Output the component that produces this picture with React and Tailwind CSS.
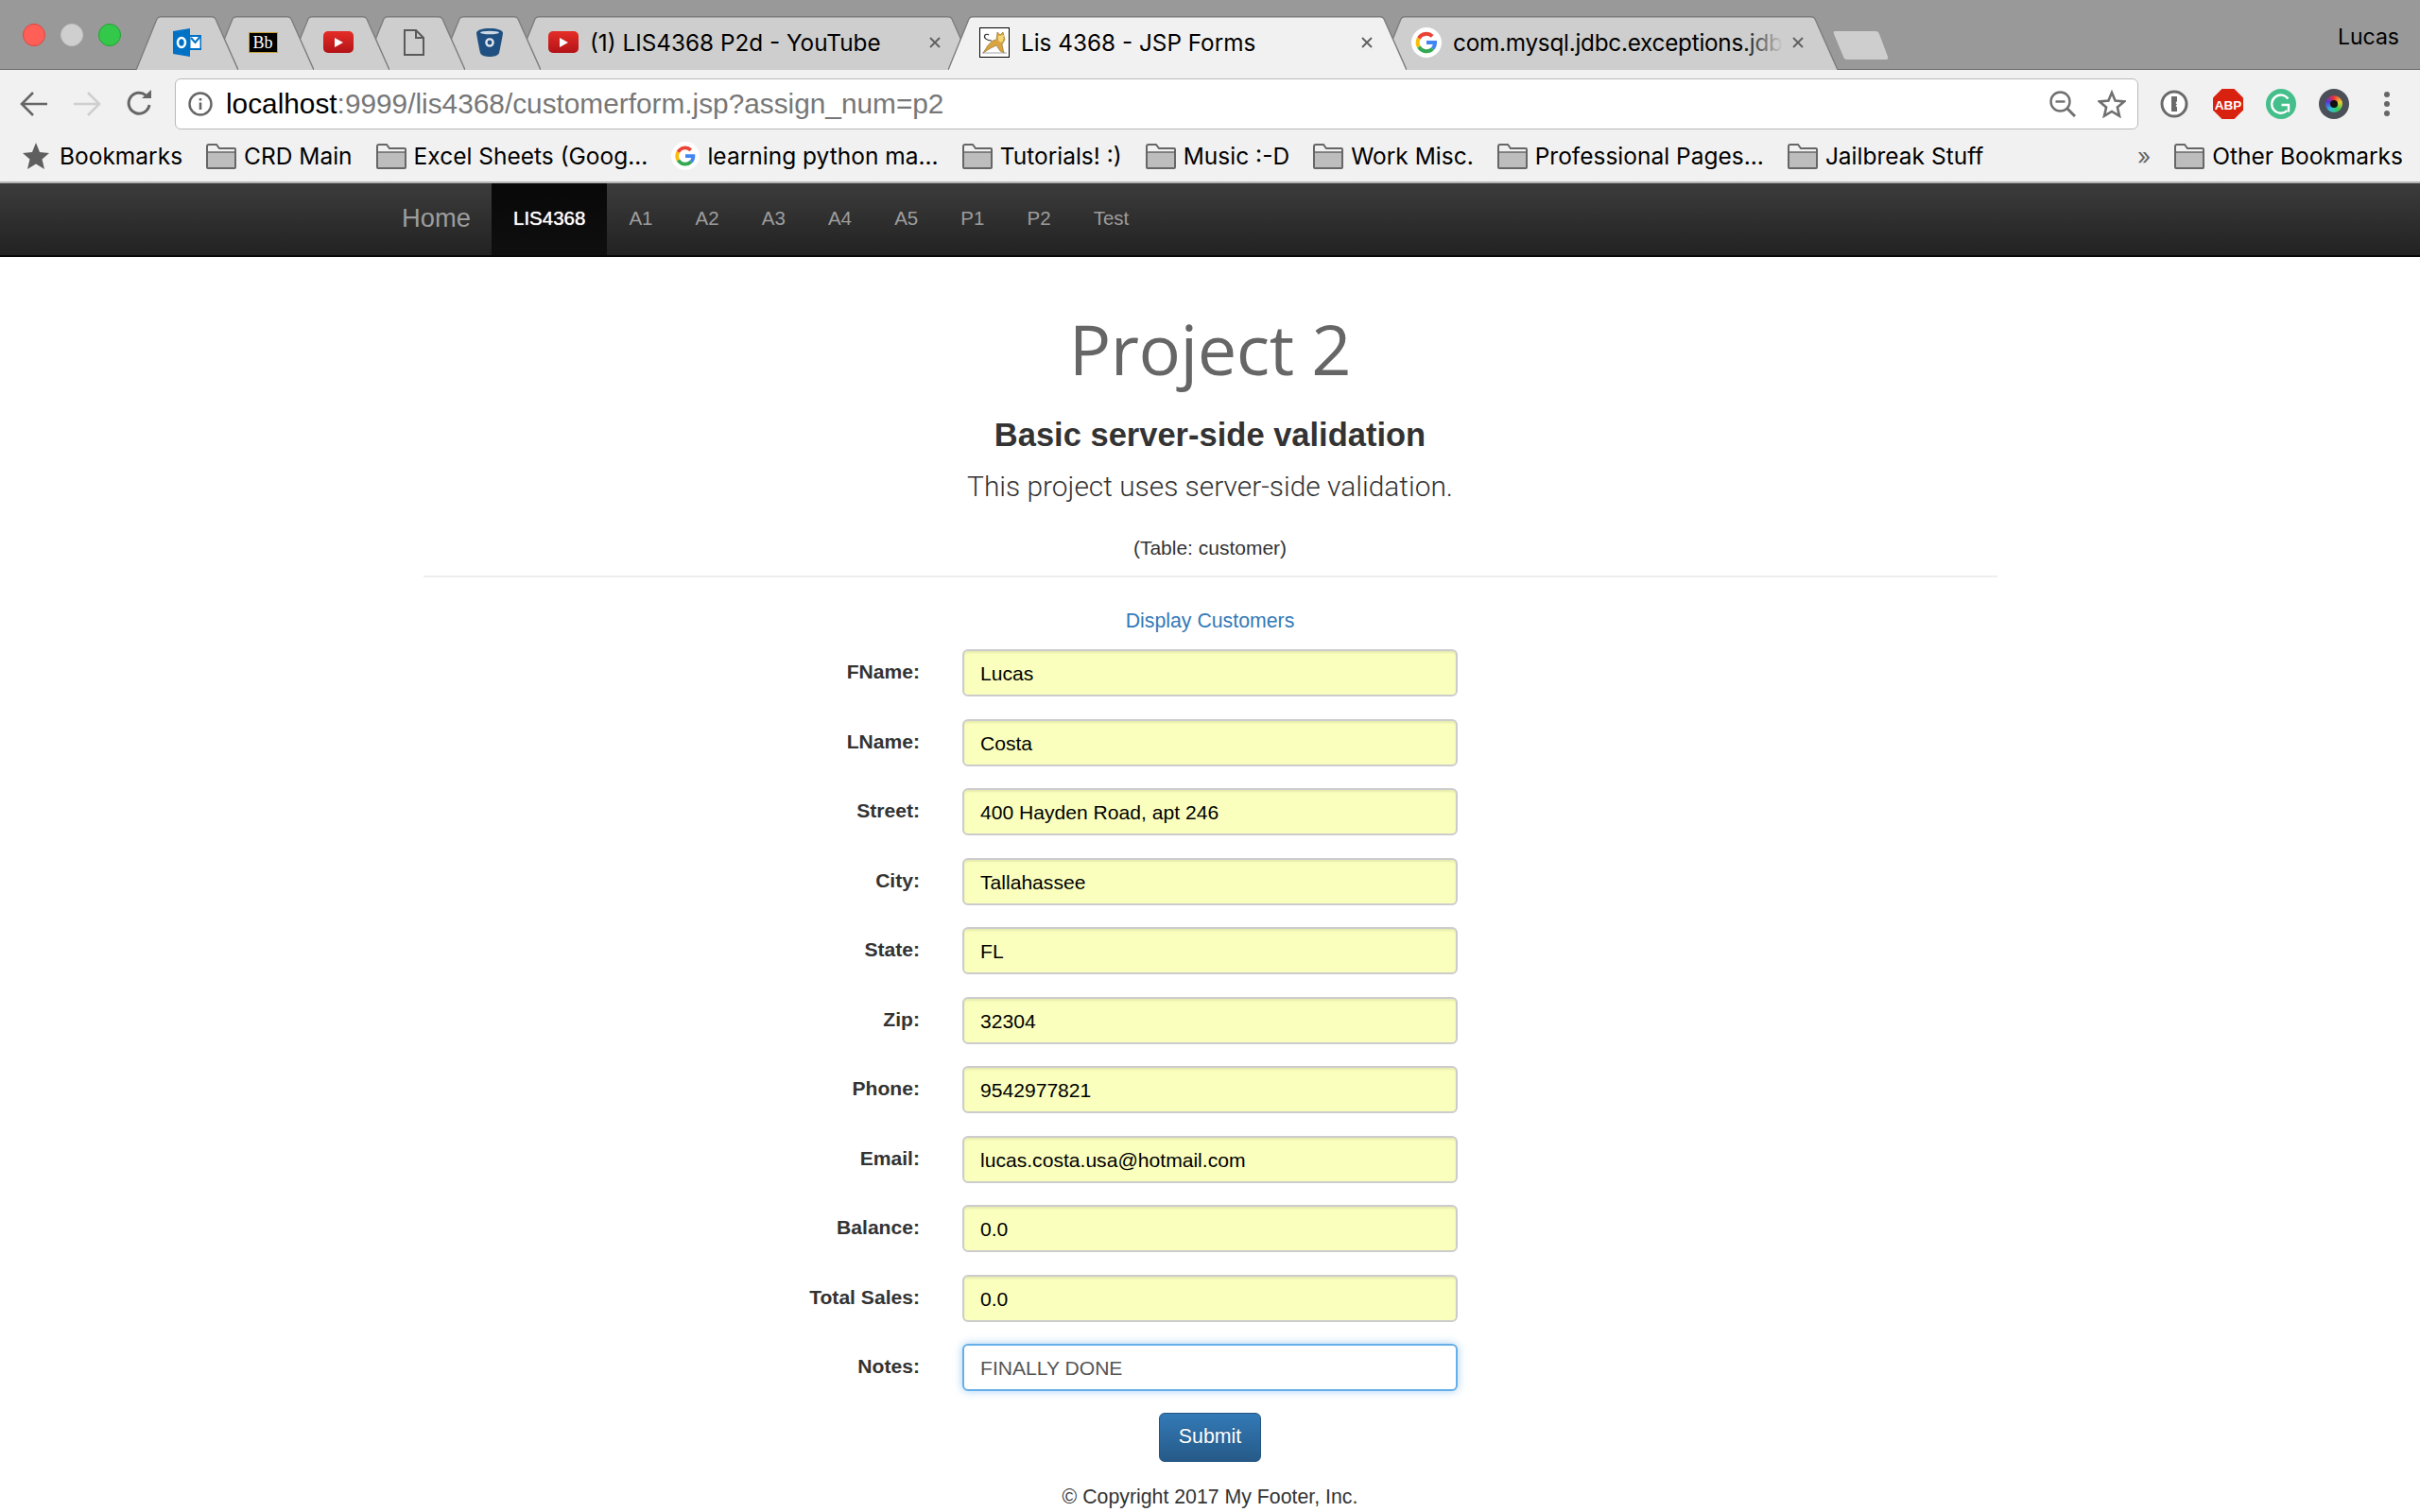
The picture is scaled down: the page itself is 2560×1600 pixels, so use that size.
import React from "react";

const Folder = () => (
  <svg width="32" height="27" viewBox="0 0 32 27" className="shrink-0">
    <path d="M1 3 Q1 1 3 1 H11 L14 5 H30 Q31 5 31 6 V25 Q31 26 30 26 H2 Q1 26 1 25 Z" fill="#f1f1f1" stroke="#666" strokeWidth="2" />
    <path d="M2 9 H30 V25 H2 Z" fill="#bdbdbd" />
    <path d="M1 9 H31" stroke="#666" strokeWidth="1.5" />
  </svg>
);

const GoogleG = ({ s = 32 }) => (
  <svg width={s} height={s} viewBox="0 0 32 32" className="shrink-0">
    <circle cx="16" cy="16" r="16" fill="#fff" />
    <path d="M16 16 H25 A9.2 9.2 0 0 1 22.4 22.6" fill="none" stroke="#4285f4" strokeWidth="4" />
    <path d="M22.4 22.6 A9.2 9.2 0 0 1 7.9 20.6" fill="none" stroke="#34a853" strokeWidth="4" />
    <path d="M7.9 20.6 A9.2 9.2 0 0 1 7.9 11.4" fill="none" stroke="#fbbc05" strokeWidth="4" />
    <path d="M7.9 11.4 A9.2 9.2 0 0 1 22.2 9.4" fill="none" stroke="#ea4335" strokeWidth="4" />
  </svg>
);

const Outlook = () => (
  <svg width="30" height="30" viewBox="0 0 30 30">
    <rect x="17" y="7" width="13" height="16" fill="#0072c6" />
    <rect x="18.5" y="9" width="10" height="12" fill="#fff" />
    <path d="M19 10 L23.5 15 L28.5 9" fill="none" stroke="#0072c6" strokeWidth="2" />
    <path d="M0 3 L18 0 V30 L0 27 Z" fill="#0072c6" />
    <ellipse cx="9" cy="15" rx="4" ry="5" fill="none" stroke="#fff" strokeWidth="2.6" />
  </svg>
);

const YouTube = () => (
  <div className="w-[32px] h-[23px] rounded-[5px] bg-gradient-to-b from-[#e52d27] to-[#b31217] flex items-center justify-center shrink-0">
    <svg width="10" height="10" viewBox="0 0 10 10"><path d="M1 0 L10 5 L1 10 Z" fill="#fff" /></svg>
  </div>
);

const Doc = () => (
  <svg width="22" height="28" viewBox="0 0 22 28">
    <path d="M1 1 H13 L21 9 V27 H1 Z M13 1 V9 H21" fill="none" stroke="#5a5a5a" strokeWidth="2" />
  </svg>
);

const Bitbucket = () => (
  <svg width="28" height="30" viewBox="0 0 28 30">
    <path d="M14 0 C22 0 28 2 28 5 C28 6 25 22 24 26 C23 29 18 30 14 30 C10 30 5 29 4 26 C3 22 0 6 0 5 C0 2 6 0 14 0 Z" fill="#205081" />
    <ellipse cx="14" cy="4.5" rx="10" ry="1.8" fill="#cfd9e4" />
    <circle cx="14" cy="15" r="3.6" fill="none" stroke="#dfe6ee" strokeWidth="2.4" />
  </svg>
);

const Blackboard = () => (
  <div className="w-[31px] h-[22px] bg-black border border-[#c9a13c] rounded-[1px] flex items-center justify-center text-white text-[18px] leading-none font-['Liberation_Serif',serif]">
    Bb
  </div>
);

const Tomcat = () => (
  <svg width="32" height="32" viewBox="0 0 32 32" className="shrink-0">
    <rect x="0.5" y="0.5" width="31" height="31" fill="#fff" stroke="#000" />
    <path d="M19 5 L22 8 L25 5 L27 13 L24 18 L26 27 L22 25 L18 19 L12 22 L4 27 L9 19 L14 14 L18 13 Z" fill="#d9a441" stroke="#8a6a2a" strokeWidth="0.6" />
    <path d="M20 9 L26 8 L25 14 L23 16 L20 14 Z" fill="#f4d676" />
    <path d="M13 14 C8 14 4 11 6 8 C7 7 9 7 10 8" fill="none" stroke="#333" strokeWidth="1.2" />
    <path d="M3 27 H29" stroke="#8a8a8a" strokeWidth="0.8" />
  </svg>
);

const CloseX = () => (
  <svg width="14" height="14" viewBox="0 0 14 14" className="shrink-0 -ml-[3px]">
    <path d="M2 2 L12 12 M12 2 L2 12" stroke="#5f5f5f" strokeWidth="1.8" />
  </svg>
);

function Tab({ w, active, z, first, children }) {
  const b = w;
  const d = `M0 57 L22 3 Q23 0.8 26 0.8 H${b - 28} Q${b - 25} 0.8 ${b - 24} 3 L${b} 57`;
  return (
    <div
      className={`relative h-[57px] shrink-0 -mb-[1px] ${first ? "" : "-ml-[28px]"}`}
      style={{ width: w, zIndex: z }}
    >
      <svg width={w} height="57" viewBox={`0 0 ${w} 57`} className="absolute inset-0">
        <path d={d + " Z"} fill={active ? "#f1f1f1" : "#cecece"} />
        <path d={d} fill="none" stroke="#7d7d7d" strokeWidth="1.4" />
      </svg>
      <div className="relative h-full flex items-center justify-center pb-[2px]">{children}</div>
    </div>
  );
}

function WideTab({ w, active, z, icon, text, fade, wide }) {
  return (
    <Tab w={w} active={active} z={z}>
      <div className={`w-full h-full flex items-center pr-[35px] gap-[12px] ${wide ? "pl-[36px]" : "pl-[33px]"}`}>
        {icon}
        <div className={`relative flex-1 whitespace-nowrap text-[24.3px] leading-[32px] text-black ${fade ? "tracking-[-0.25px]" : ""}`}>
          {text}
          {fade && (
            <div className="absolute right-0 top-0 bottom-0 w-[44px] bg-gradient-to-r from-transparent to-[#cecece]" />
          )}
        </div>
        <CloseX />
      </div>
    </Tab>
  );
}

const Bookmark = ({ icon, label, star }) => (
  <div className={`flex items-center shrink-0 ${star ? "gap-[11px]" : "gap-[8px]"}`}>
    {icon}
    <span className="whitespace-nowrap">{label}</span>
  </div>
);

const fields = [
  ["FName:", "Lucas"],
  ["LName:", "Costa"],
  ["Street:", "400 Hayden Road, apt 246"],
  ["City:", "Tallahassee"],
  ["State:", "FL"],
  ["Zip:", "32304"],
  ["Phone:", "9542977821"],
  ["Email:", "lucas.costa.usa@hotmail.com"],
  ["Balance:", "0.0"],
  ["Total Sales:", "0.0"],
];

const navItems = ["A1", "A2", "A3", "A4", "A5", "P1", "P2", "Test"];

export default function App() {
  return (
    <div className="h-screen overflow-hidden bg-white font-['Liberation_Sans',sans-serif] text-[#333]">
      {/* Tab strip */}
      <div className="relative h-[74px] bg-[#999999] border-b border-[#6e6e6e] flex items-end font-['Inter',sans-serif]">
        <div className="w-[144px] self-stretch shrink-0 flex items-center gap-[16px] pl-[24px]">
          <div className="w-[24px] h-[24px] rounded-full bg-[#ff5f57] border border-[#e0443e]" />
          <div className="w-[24px] h-[24px] rounded-full bg-[#cfcfcf] border border-[#c4c4c4]" />
          <div className="w-[24px] h-[24px] rounded-full bg-[#34c84a] border border-[#1fa32f]" />
        </div>
        <Tab w={108} z={9} first><Outlook /></Tab>
        <Tab w={108} z={8}><Blackboard /></Tab>
        <Tab w={108} z={7}><YouTube /></Tab>
        <Tab w={108} z={6}><Doc /></Tab>
        <Tab w={108} z={5}><Bitbucket /></Tab>
        <WideTab w={487} z={4} wide icon={<YouTube />} text="(1) LIS4368 P2d - YouTube" />
        <WideTab w={485} z={10} active icon={<Tomcat />} text="Lis 4368 - JSP Forms" />
        <WideTab w={484} z={3} icon={<GoogleG />} text="com.mysql.jdbc.exceptions.jdb" fade />
        <div className="shrink-0 -ml-[5px] mb-[10px] w-[62px] h-[30px]">
          <svg width="62" height="30" viewBox="0 0 62 30">
            <path d="M2 0 H45 Q48 0 49 3 L58 27 Q59 30 56 30 H15 Q12 30 11 27 L1 3 Q0 0 2 0 Z" fill="#cecece" />
          </svg>
        </div>
        <div className="absolute right-[22px] top-[25px] text-[23px] leading-[28px] text-black">Lucas</div>
      </div>

      {/* Toolbar */}
      <div className="h-[66px] bg-[#f1f1f1] flex items-center pl-[20px] pr-[24px] pt-[6px]">
        <svg width="32" height="28" viewBox="0 0 32 28" className="shrink-0">
          <path d="M30 14 H4 M15 2 L3 14 L15 26" fill="none" stroke="#666" strokeWidth="2.6" />
        </svg>
        <svg width="32" height="28" viewBox="0 0 32 28" className="shrink-0 ml-[24px]">
          <path d="M2 14 H28 M17 2 L29 14 L17 26" fill="none" stroke="#cfcfcf" strokeWidth="2.6" />
        </svg>
        <svg width="30" height="30" viewBox="0 0 30 30" className="shrink-0 ml-[25px]">
          <path d="M25 16 A11 11 0 1 1 21.5 6" fill="none" stroke="#666" strokeWidth="3" />
          <path d="M17 9 L27 9 L27 0 Z" fill="#666" />
        </svg>
        <div className="ml-[22px] w-[2077px] h-[54px] bg-white border border-[#b9b9b9] rounded-[6px] flex items-center pl-[13px] pr-[12px] shrink-0">
          <svg width="26" height="26" viewBox="0 0 26 26" className="shrink-0">
            <circle cx="13" cy="13" r="11.5" fill="none" stroke="#666" strokeWidth="2.4" />
            <path d="M13 11.5 V19 M13 7 V9.5" stroke="#666" strokeWidth="2.6" />
          </svg>
          <div className="ml-[14px] text-[29.8px] whitespace-nowrap flex-1 text-[#777]">
            <span className="text-black">localhost</span>:9999/lis4368/customerform.jsp?assign_num=p2
          </div>
          <svg width="28" height="28" viewBox="0 0 28 28" className="shrink-0">
            <circle cx="11.5" cy="11.5" r="10" fill="none" stroke="#707070" strokeWidth="2.4" />
            <path d="M6.5 11.5 H16.5" stroke="#707070" strokeWidth="2.4" />
            <path d="M19 19 L27 27" stroke="#707070" strokeWidth="3" />
          </svg>
          <svg width="30" height="30" viewBox="0 0 30 30" className="shrink-0 ml-[23px]">
            <path d="M15 3 L18.6 11.6 L28 12.4 L20.9 18.5 L23 27.7 L15 22.9 L7 27.7 L9.1 18.5 L2 12.4 L11.4 11.6 Z" fill="none" stroke="#707070" strokeWidth="2.6" />
          </svg>
        </div>
        <svg width="30" height="30" viewBox="0 0 30 30" className="shrink-0 ml-[23px]">
          <circle cx="15" cy="15" r="13" fill="#fff" stroke="#6a6a6a" strokeWidth="3" />
          <path d="M12 7 H18 V12 L16.5 14 L18 15.5 L16.5 17 L18 18.5 V23 H12 V14 Z" fill="#6a6a6a" />
        </svg>
        <svg width="32" height="32" viewBox="0 0 32 32" className="shrink-0 ml-[26px]">
          <path d="M9.5 0 H22.5 L32 9.5 V22.5 L22.5 32 H9.5 L0 22.5 V9.5 Z" fill="#d8210f" />
          <text x="16" y="21.5" textAnchor="middle" fontSize="13.5" fontWeight="700" fill="#fff" fontFamily="Liberation Sans, sans-serif">ABP</text>
        </svg>
        <svg width="32" height="32" viewBox="0 0 32 32" className="shrink-0 ml-[24px]">
          <circle cx="16" cy="16" r="16" fill="#44bf8b" />
          <path d="M23.5 10.5 A9.6 9.6 0 1 0 22.5 23" fill="none" stroke="#fff" strokeWidth="2.4" />
          <path d="M16.5 17 H24 V24.5" fill="none" stroke="#fff" strokeWidth="2.4" />
        </svg>
        <div className="ml-[24px] w-[32px] h-[32px] rounded-full bg-[#4b4f57] flex items-center justify-center shrink-0">
          <div className="w-[18px] h-[18px] rounded-full bg-[conic-gradient(#e33,#ec3,#3c5,#3bd,#53d,#e33)] flex items-center justify-center">
            <div className="w-[8px] h-[8px] rounded-full bg-[#111]" />
          </div>
        </div>
        <div className="ml-[37px] flex flex-col gap-[4px] shrink-0">
          <div className="w-[6px] h-[6px] rounded-full bg-[#666]" />
          <div className="w-[6px] h-[6px] rounded-full bg-[#666]" />
          <div className="w-[6px] h-[6px] rounded-full bg-[#666]" />
        </div>
      </div>

      {/* Bookmarks bar */}
      <div className="h-[54px] bg-[#f1f1f1] border-b-2 border-[#b5b5b5] flex items-center pl-[24px] pr-[18px] pb-[2px] text-[24.5px] text-black font-['Inter',sans-serif] gap-[25px]">
        <Bookmark
          star
          icon={
            <svg width="28" height="28" viewBox="0 0 28 28" className="shrink-0">
              <path d="M14 0 L18 10 L28 11 L20.5 17.5 L23 28 L14 22.5 L5 28 L7.5 17.5 L0 11 L10 10 Z" fill="#5f5f5f" />
            </svg>
          }
          label="Bookmarks"
        />
        <Bookmark icon={<Folder />} label="CRD Main" />
        <Bookmark icon={<Folder />} label="Excel Sheets (Goog..." />
        <Bookmark icon={<GoogleG s={30} />} label="learning python ma..." />
        <Bookmark icon={<Folder />} label="Tutorials! :)" />
        <Bookmark icon={<Folder />} label="Music :-D" />
        <Bookmark icon={<Folder />} label="Work Misc." />
        <Bookmark icon={<Folder />} label="Professional Pages..." />
        <Bookmark icon={<Folder />} label="Jailbreak Stuff" />
        <div className="flex-1 flex justify-end text-[#666]">»</div>
        <Bookmark icon={<Folder />} label="Other Bookmarks" />
      </div>

      {/* Navbar */}
      <div className="h-[78px] border-b-2 border-[#080808] bg-gradient-to-b from-[#3c3c3c] to-[#222222] flex pl-[402px] text-[20.5px] text-[#9d9d9d]">
        <div className="pl-[23px] w-[118px] flex items-center text-[27.3px] pb-[2px]">Home</div>
        <div className="px-[23px] flex items-center text-white bg-gradient-to-b from-[#080808] to-[#0f0f0f] [text-shadow:0_0_1px_#fff] pb-[2px]">LIS4368</div>
        {navItems.map((n) => (
          <div key={n} className="pl-[23px] w-[70.2px] flex items-center whitespace-nowrap pb-[2px]">{n}</div>
        ))}
      </div>

      {/* Content */}
      <div className="w-[1665px] mx-auto text-center">
        <h1 className="mt-[52px] h-[90px] leading-[90px] text-[74px] text-[#666] font-['Open_Sans',sans-serif] tracking-[-0.5px]">Project 2</h1>
        <h2 className="mt-[24px] h-[44px] leading-[44px] text-[34.5px] font-bold">Basic server-side validation</h2>
        <p className="mt-[11px] h-[44px] leading-[44px] text-[29.9px] font-light font-['Roboto',sans-serif]">This project uses server-side validation.</p>
        <p className="mt-[28px] h-[30px] leading-[30px] text-[21px]">(Table: customer)</p>
        <div className="mt-[14px] h-[2px] bg-[#eeeeee]" />
        <div className="mt-[32px] h-[28px] leading-[28px] text-[21.3px] text-[#337ab7]">Display Customers</div>

        <div className="mt-[16px] grid grid-cols-[1fr_524px_1fr] gap-x-[45px] gap-y-[23.5px] text-[21.1px]">
          {fields.map(([label, value]) => (
            <React.Fragment key={label}>
              <div className="text-right font-bold h-[50px] leading-[47px]">{label}</div>
              <div className="h-[50px] bg-[#faffbd] border-2 border-[#cccccc] rounded-[6px] pl-[17px] flex items-center text-left text-black shadow-[inset_0_2px_2px_rgba(0,0,0,0.075)] pt-[2px]">
                {value}
              </div>
              <div />
            </React.Fragment>
          ))}
          <div className="text-right font-bold h-[50px] leading-[47px]">Notes:</div>
          <div className="h-[50px] bg-white border-2 border-[#66afe9] rounded-[6px] pl-[17px] flex items-center text-left text-[#555] shadow-[0_0_10px_rgba(102,175,233,0.6)] pt-[2px]">
            FINALLY DONE
          </div>
          <div />
        </div>

        <div className="mt-[23px] flex justify-center">
          <div className="w-[108px] h-[52px] rounded-[6px] border border-[#245580] bg-gradient-to-b from-[#337ab7] to-[#265a88] text-white flex items-center justify-center text-[21.3px] [text-shadow:0_-1px_0_rgba(0,0,0,0.2)]">
            Submit
          </div>
        </div>
        <div className="mt-[23px] h-[28px] leading-[28px] text-[21.3px]">© Copyright 2017 My Footer, Inc.</div>
      </div>
    </div>
  );
}
